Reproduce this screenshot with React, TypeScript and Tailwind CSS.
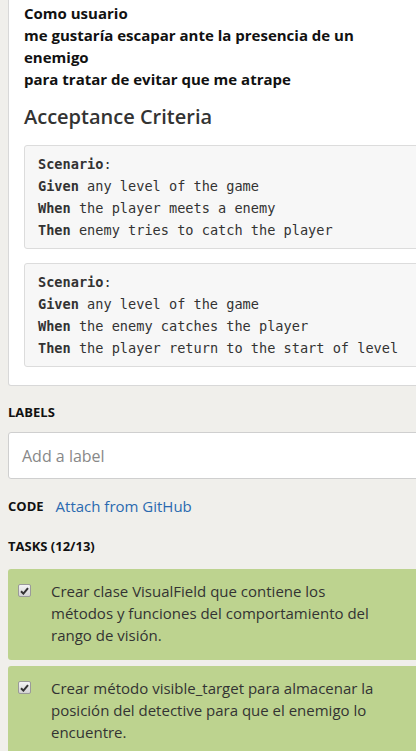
const scenarios = [
  {
    given: 'any level of the game',
    when: 'the player meets a enemy',
    then: 'enemy tries to catch the player',
  },
  {
    given: 'any level of the game',
    when: 'the enemy catches the player',
    then: 'the player return to the start of level',
  },
];

const tasks = [
  'Crear clase VisualField que contiene los métodos y funciones del comportamiento del rango de visión.',
  'Crear método visible_target para almacenar la posición del detective para que el enemigo lo encuentre.',
];

function CheckBox() {
  return (
    <div className="w-[13px] h-[13px] rounded-[2px] border border-[#9a9a9a] bg-gradient-to-b from-[#f4f4f4] to-[#d4d4d4] flex items-center justify-center">
      <svg width="9" height="8" viewBox="0 0 9 8">
        <path d="M1 4.2 L3.4 6.6 L8 1.2" stroke="#333" strokeWidth="2" fill="none" />
      </svg>
    </div>
  );
}

export default function App() {
  return (
    <div
      className="w-[416px] h-[751px] overflow-hidden bg-[#f0efeb] text-[#222]"
      style={{ fontFamily: '"Open Sans", "Liberation Sans", sans-serif' }}
    >
      <div className="w-[460px] pl-2">
        {/* story card */}
        <div className="bg-white border border-t-0 border-[#d8d8d8] rounded-b-[3px] pl-[15px] pt-[2px] pb-[18px]">
          <div className="text-[15px] leading-[22px] font-bold text-[#111]">
            <div>Como usuario</div>
            <div className="w-[345px]">me gustaría escapar ante la presencia de un enemigo</div>
            <div>para tratar de evitar que me atrape</div>
          </div>
          <h2 className="mt-[13px] text-[20px] leading-[28px] font-semibold text-[#333]">
            Acceptance Criteria
          </h2>
          <div className="mt-[14px] flex flex-col gap-[14px]">
            {scenarios.map((s, i) => (
              <pre
                key={i}
                className="bg-[#f7f7f7] border border-[#dcdcdc] rounded-[3px] pl-[13px] py-[7px] text-[13.6px] leading-[22px] text-[#333]"
                style={{ fontFamily: '"DejaVu Sans Mono", "Liberation Mono", monospace' }}
              >
                <div><b>Scenario</b>:</div>
                <div><b>Given</b> {s.given}</div>
                <div><b>When</b> {s.when}</div>
                <div><b>Then</b> {s.then}</div>
              </pre>
            ))}
          </div>
        </div>

        {/* labels */}
        <div className="mt-[17px] text-[13px] leading-[18px] font-bold text-[#111]">LABELS</div>
        <div className="mt-[11px] h-[47px] bg-white border border-[#cfcfcf] rounded-[3px] flex items-center pl-[13px]">
          <span className="text-[16px] text-[#888]">Add a label</span>
        </div>

        {/* code */}
        <div className="mt-[17px] flex items-center gap-[12px] leading-[20px]">
          <span className="text-[13px] font-bold text-[#111]">CODE</span>
          <span className="text-[15px] text-[#2a6ab0]">Attach from GitHub</span>
        </div>

        {/* tasks */}
        <div className="mt-[21px] text-[13px] leading-[18px] font-bold text-[#111]">TASKS (12/13)</div>
        <div className="mt-[14px] flex flex-col gap-[6px]">
          {tasks.map((t, i) => (
            <div key={i} className="bg-[#bdd38f] rounded-[3px] flex pl-[10px] pt-[11px] pb-[14px]">
              <div className="pt-[4px]">
                <CheckBox />
              </div>
              <div className="ml-[20px] w-[335px] text-[15px] leading-[22px] text-[#333]">{t}</div>
            </div>
          ))}
        </div>
      </div>
    </div>
  );
}
